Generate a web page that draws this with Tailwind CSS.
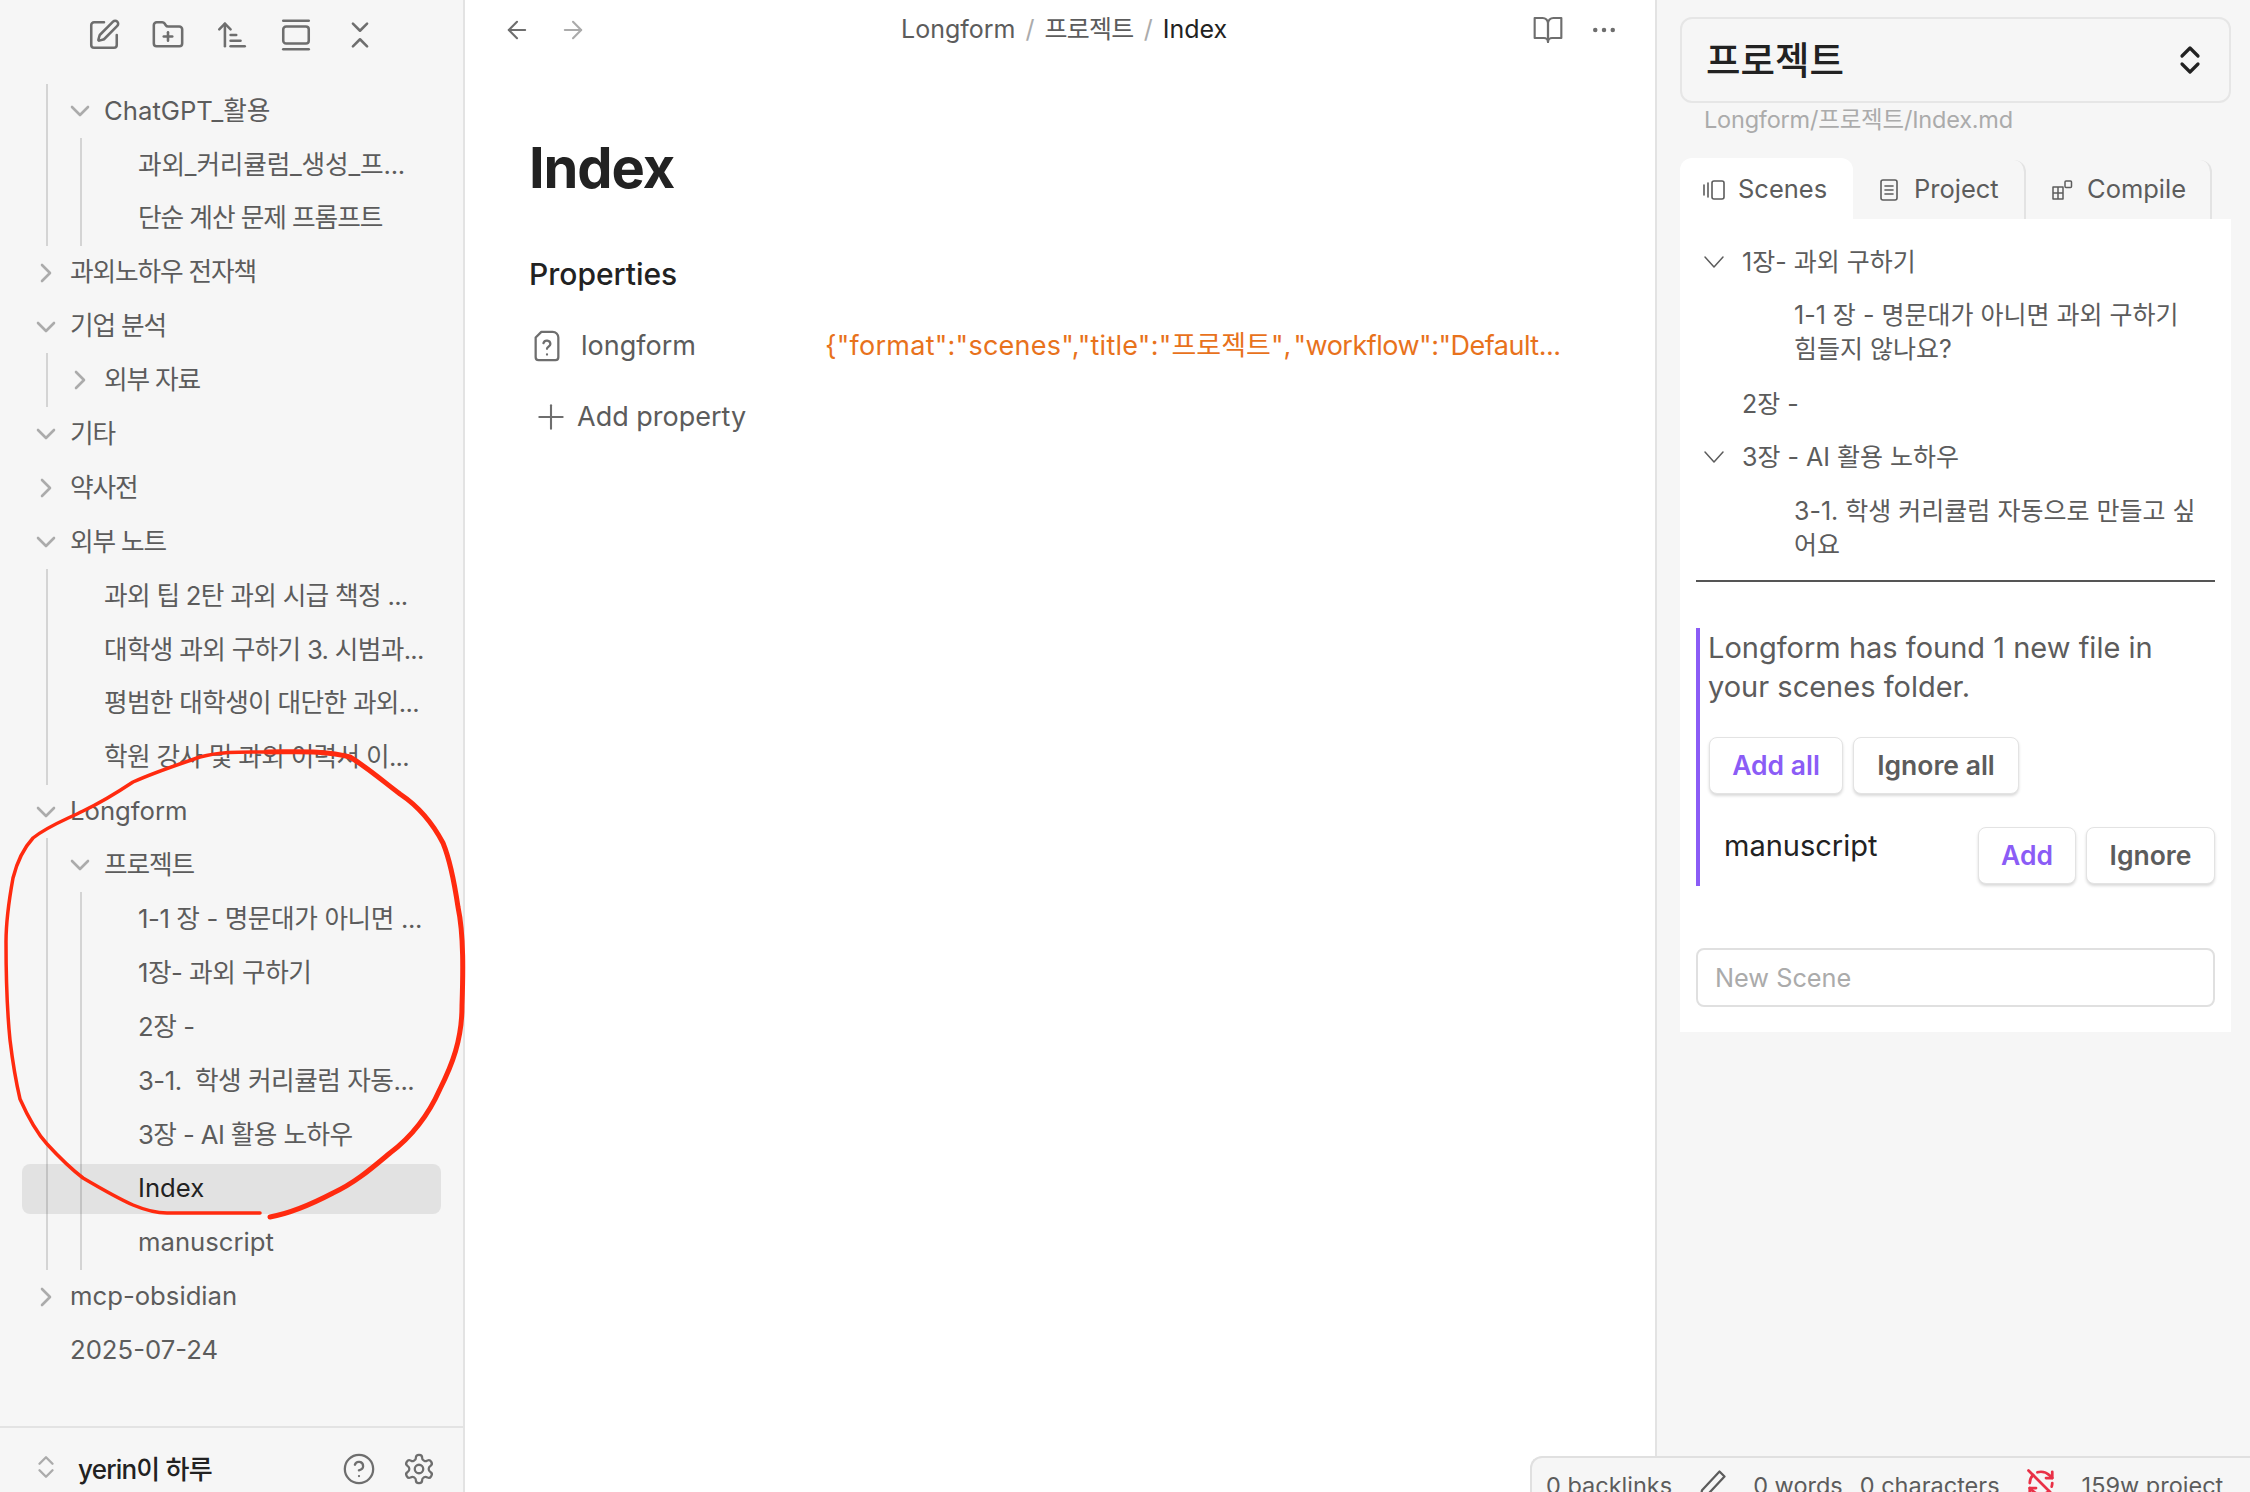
<!DOCTYPE html>
<html lang="en">
<head>
    <meta charset="UTF-8">
    <title>Index - Longform</title>
    <script src="https://cdn.jsdelivr.net/npm/@tailwindcss/browser@4"></script>
</head>
<body class="bg-white font-[Inter,'Noto_Sans_CJK_KR',sans-serif] text-[#5c5c5c]">
    <svg class="hidden">
        <symbol id="down" viewBox="0 0 24 24"><path d="M4 8l8 8 8-8" fill="none" stroke="currentColor" stroke-width="2.6" stroke-linecap="round" stroke-linejoin="round"/></symbol>
        <symbol id="right" viewBox="0 0 24 24"><path d="M8 4l8 8-8 8" fill="none" stroke="currentColor" stroke-width="2.6" stroke-linecap="round" stroke-linejoin="round"/></symbol>
        <symbol id="down-thin" viewBox="0 0 24 24"><path d="M3 7l9 10 9-10" fill="none" stroke="currentColor" stroke-width="1.5" stroke-linecap="round" stroke-linejoin="round"/></symbol>
    </svg>

    <div class="relative flex h-[1492px] w-[2250px] overflow-hidden">
        <!-- file explorer -->
        <aside class="flex w-[465px] shrink-0 flex-col border-r-2 border-[#e3e3e3] bg-[#f6f6f6]">
            <div class="flex h-[84px] shrink-0 items-start gap-[30px] pl-[87px] pt-[18px] text-[#6e6e6e]">
                <svg class="size-[34px]" viewBox="0 0 24 24" fill="none" stroke="currentColor" stroke-width="1.8" stroke-linecap="round" stroke-linejoin="round"><path d="M12 3H5a2 2 0 0 0-2 2v14a2 2 0 0 0 2 2h14a2 2 0 0 0 2-2v-7"/><path d="M18.375 2.625a1 1 0 0 1 3 3l-9.013 9.014a2 2 0 0 1-.853.505l-2.873.84a.5.5 0 0 1-.62-.62l.84-2.873a2 2 0 0 1 .506-.852z"/></svg>
                <svg class="size-[34px]" viewBox="0 0 24 24" fill="none" stroke="currentColor" stroke-width="1.8" stroke-linecap="round" stroke-linejoin="round"><path d="M12 10v6"/><path d="M9 13h6"/><path d="M20 20a2 2 0 0 0 2-2V8a2 2 0 0 0-2-2h-7.9a2 2 0 0 1-1.69-.9L9.6 3.9A2 2 0 0 0 7.93 3H4a2 2 0 0 0-2 2v13a2 2 0 0 0 2 2Z"/></svg>
                <svg class="size-[34px]" viewBox="0 0 24 24" fill="none" stroke="currentColor" stroke-width="1.8" stroke-linecap="round" stroke-linejoin="round"><path d="m3 8 4-4 4 4"/><path d="M7 4v16"/><path d="M11 12h4"/><path d="M11 16h7"/><path d="M11 20h10"/></svg>
                <svg class="size-[34px]" viewBox="0 0 24 24" fill="none" stroke="currentColor" stroke-width="1.8" stroke-linecap="round" stroke-linejoin="round"><path d="M3 2h18"/><rect x="3" y="6" width="18" height="12" rx="2"/><path d="M3 22h18"/></svg>
                <svg class="size-[34px]" viewBox="0 0 24 24" fill="none" stroke="currentColor" stroke-width="1.8" stroke-linecap="round" stroke-linejoin="round"><path d="m7 20 5-5 5 5"/><path d="m7 4 5 5 5-5"/></svg>
            </div>

            <nav class="flex-1 whitespace-nowrap text-[25.7px]">
                <div class="ml-[46px] border-l-2 border-[#d4d4d4]">
                    <div class="flex h-[53.9px] items-center gap-[12px] pl-[20px]"><svg class="size-[24px] text-[#ababab]"><use href="#down"/></svg>ChatGPT_활용</div>
                    <div class="ml-[32px] border-l-2 border-[#d4d4d4] pl-[56px]">
                        <div class="flex h-[53.9px] items-center tracking-[-0.2px]">과외_커리큘럼_생성_프...</div>
                        <div class="flex h-[53.9px] items-center tracking-[-1.05px]">단순 계산 문제 프롬프트</div>
                    </div>
                </div>
                <div class="flex h-[53.9px] items-center gap-[12px] pl-[34px] tracking-[-1.15px]"><svg class="size-[24px] text-[#ababab]"><use href="#right"/></svg>과외노하우 전자책</div>
                <div class="flex h-[53.9px] items-center gap-[12px] pl-[34px] tracking-[-1.15px]"><svg class="size-[24px] text-[#ababab]"><use href="#down"/></svg>기업 분석</div>
                <div class="ml-[46px] border-l-2 border-[#d4d4d4]">
                    <div class="flex h-[53.9px] items-center gap-[12px] pl-[20px] tracking-[-1.15px]"><svg class="size-[24px] text-[#ababab]"><use href="#right"/></svg>외부 자료</div>
                </div>
                <div class="flex h-[53.9px] items-center gap-[12px] pl-[34px] tracking-[-1.15px]"><svg class="size-[24px] text-[#ababab]"><use href="#down"/></svg>기타</div>
                <div class="flex h-[53.9px] items-center gap-[12px] pl-[34px] tracking-[-1.15px]"><svg class="size-[24px] text-[#ababab]"><use href="#right"/></svg>약사전</div>
                <div class="flex h-[53.9px] items-center gap-[12px] pl-[34px] tracking-[-1.15px]"><svg class="size-[24px] text-[#ababab]"><use href="#down"/></svg>외부 노트</div>
                <div class="ml-[46px] border-l-2 border-[#d4d4d4] pl-[56px] tracking-[-0.7px]">
                    <div class="flex h-[53.9px] items-center">과외 팁 2탄 과외 시급 책정 ...</div>
                    <div class="flex h-[53.9px] items-center">대학생 과외 구하기 3. 시범과...</div>
                    <div class="flex h-[53.9px] items-center">평범한 대학생이 대단한 과외...</div>
                    <div class="flex h-[53.9px] items-center">학원 강사 및 과외 이력서 이...</div>
                </div>
                <div class="flex h-[53.9px] items-center gap-[12px] pl-[34px]"><svg class="size-[24px] text-[#ababab]"><use href="#down"/></svg>Longform</div>
                <div class="ml-[46px] border-l-2 border-[#d4d4d4]">
                    <div class="flex h-[53.9px] items-center gap-[12px] pl-[20px] tracking-[-1.15px]"><svg class="size-[24px] text-[#ababab]"><use href="#down"/></svg>프로젝트</div>
                    <div class="ml-[32px] border-l-2 border-[#d4d4d4] pl-[56px]">
                        <div class="flex h-[53.9px] items-center tracking-[-0.4px]">1-1 장 - 명문대가 아니면 ...</div>
                        <div class="flex h-[53.9px] items-center tracking-[-0.5px]">1장- 과외 구하기</div>
                        <div class="flex h-[53.9px] items-center tracking-[-0.4px]">2장 -</div>
                        <div class="flex h-[53.9px] items-center whitespace-pre tracking-[-0.5px]">3-1.  학생 커리큘럼 자동...</div>
                        <div class="flex h-[53.9px] items-center tracking-[-0.6px]">3장 - AI 활용 노하우</div>
                        <div class="flex h-[53.9px] items-center">
                            <div class="ml-[-116px] flex h-[50px] w-[419px] items-center rounded-lg bg-black/8 pl-[116px] text-[#222222]">Index</div>
                        </div>
                        <div class="flex h-[53.9px] items-center">manuscript</div>
                    </div>
                </div>
                <div class="flex h-[53.9px] items-center gap-[12px] pl-[34px]"><svg class="size-[24px] text-[#ababab]"><use href="#right"/></svg>mcp-obsidian</div>
                <div class="flex h-[53.9px] items-center pl-[70px]">2025-07-24</div>
            </nav>

            <div class="flex h-[66px] shrink-0 items-start border-t-2 border-[#e3e3e3] pt-[24px]">
                <svg class="ml-[33px] mt-[2px] size-[26px] text-[#ababab]" viewBox="0 0 24 24" fill="none" stroke="currentColor" stroke-width="2.2" stroke-linecap="round" stroke-linejoin="round"><path d="m6 9 6-6 6 6"/><path d="m6 15 6 6 6-6"/></svg>
                <span class="ml-[19px] text-[26px] font-medium leading-[36px] tracking-[-0.8px] text-[#222222]">yerin이 하루</span>
                <svg class="ml-auto size-[34px] text-[#6e6e6e]" viewBox="0 0 24 24" fill="none" stroke="currentColor" stroke-width="1.6" stroke-linecap="round" stroke-linejoin="round"><circle cx="12" cy="12" r="10"/><path d="M9.09 9a3 3 0 0 1 5.83 1c0 2-3 3-3 3"/><path d="M12 17h.01"/></svg>
                <svg class="ml-[26px] mr-[27px] size-[34px] text-[#6e6e6e]" viewBox="0 0 24 24" fill="none" stroke="currentColor" stroke-width="1.6" stroke-linecap="round" stroke-linejoin="round"><path d="M12.22 2h-.44a2 2 0 0 0-2 2v.18a2 2 0 0 1-1 1.73l-.43.25a2 2 0 0 1-2 0l-.15-.08a2 2 0 0 0-2.73.73l-.22.38a2 2 0 0 0 .73 2.73l.15.1a2 2 0 0 1 1 1.72v.51a2 2 0 0 1-1 1.74l-.15.09a2 2 0 0 0-.73 2.73l.22.38a2 2 0 0 0 2.73.73l.15-.08a2 2 0 0 1 2 0l.43.25a2 2 0 0 1 1 1.73V20a2 2 0 0 0 2 2h.44a2 2 0 0 0 2-2v-.18a2 2 0 0 1 1-1.73l.43-.25a2 2 0 0 1 2 0l.15.08a2 2 0 0 0 2.73-.73l.22-.39a2 2 0 0 0-.73-2.73l-.15-.08a2 2 0 0 1-1-1.74v-.5a2 2 0 0 1 1-1.74l.15-.09a2 2 0 0 0 .73-2.73l-.22-.38a2 2 0 0 0-2.73-.73l-.15.08a2 2 0 0 1-2 0l-.43-.25a2 2 0 0 1-1-1.73V4a2 2 0 0 0-2-2z"/><circle cx="12" cy="12" r="3"/></svg>
            </div>
        </aside>

        <!-- note -->
        <main class="flex w-[1192px] shrink-0 flex-col border-r-2 border-[#e3e3e3]">
            <div class="flex h-[59px] shrink-0 items-center pl-[38px] pr-[36px]">
                <div class="flex w-[240px] items-center gap-[28px]">
                    <svg class="size-[28px] text-[#6e6e6e]" viewBox="0 0 24 24" fill="none" stroke="currentColor" stroke-width="1.8" stroke-linecap="round" stroke-linejoin="round"><path d="m12 19-7-7 7-7"/><path d="M19 12H5"/></svg>
                    <svg class="size-[28px] text-[#ababab]" viewBox="0 0 24 24" fill="none" stroke="currentColor" stroke-width="1.8" stroke-linecap="round" stroke-linejoin="round"><path d="M5 12h14"/><path d="m12 5 7 7-7 7"/></svg>
                </div>
                <div class="ml-[158px] flex items-center gap-[10px] whitespace-nowrap text-[25px]">
                    <span>Longform</span><span class="text-[#ababab]">/</span><span class="tracking-[-0.7px]">프로젝트</span><span class="text-[#ababab]">/</span><span class="text-[#222222]">Index</span>
                </div>
                <svg class="ml-auto size-[32px] text-[#6e6e6e]" viewBox="0 0 24 24" fill="none" stroke="currentColor" stroke-width="1.6" stroke-linecap="round" stroke-linejoin="round"><path d="M2 3h6a4 4 0 0 1 4 4v14a3 3 0 0 0-3-3H2z"/><path d="M22 3h-6a4 4 0 0 0-4 4v14a3 3 0 0 1 3-3h7z"/></svg>
                <svg class="ml-[25px] size-[30px] text-[#6e6e6e]" viewBox="0 0 24 24" fill="currentColor"><circle cx="5" cy="12" r="1.8"/><circle cx="12" cy="12" r="1.8"/><circle cx="19" cy="12" r="1.8"/></svg>
            </div>
            <div class="pl-[64px]">
                <h1 class="mt-[72px] text-[56px] font-bold leading-[74px] tracking-[-0.02em] text-[#222222]">Index</h1>
                <h2 class="mt-[49px] text-[30px] font-medium leading-[40px] text-[#222222]">Properties</h2>
                <div class="ml-[1px] mt-[16px] flex h-[72px] items-center text-[27px]">
                    <svg class="size-[34px] text-[#6e6e6e]" viewBox="0 0 24 24" fill="none" stroke="currentColor" stroke-width="1.6" stroke-linecap="round" stroke-linejoin="round"><path d="M8 2h8a4 4 0 0 1 4 4v14a2 2 0 0 1-2 2H6a2 2 0 0 1-2-2V6z"/><path d="M9.5 10a2.5 2.5 0 0 1 4.9.6c0 1.6-2.4 2-2.4 3.4"/><path d="M12 18h.01"/></svg>
                    <span class="ml-[17px] w-[244px]">longform</span>
                    <span class="whitespace-nowrap text-[#e8721c]"><span class="tracking-[0.25px]">{"format":"scenes","title":"</span>프로젝트<span class="tracking-[2.2px]">",</span><span class="tracking-[-0.5px]">"workflow":"Default...</span></span>
                </div>
                <div class="ml-[1px] flex h-[70px] items-center text-[27px]">
                    <svg class="ml-[7px] size-[28px] text-[#6e6e6e]" viewBox="0 0 24 24" fill="none" stroke="currentColor" stroke-width="1.8" stroke-linecap="round"><path d="M12 2v20"/><path d="M2 12h20"/></svg>
                    <span class="ml-[12px]">Add property</span>
                </div>
            </div>
        </main>

        <!-- longform pane -->
        <section class="flex-1 bg-[#f6f6f6] pl-[23px] pr-[19px] pt-[17px]">
            <div class="flex h-[86px] items-center justify-between rounded-xl border-2 border-[#e6e6e6] pl-[24px] pr-[23px]">
                <span class="pt-[2px] text-[37.5px] font-medium text-[#222222]">프로젝트</span>
                <svg class="size-[32px] text-[#222222]" viewBox="0 0 24 24" fill="none" stroke="currentColor" stroke-width="2.4" stroke-linecap="round" stroke-linejoin="round"><path d="m6 9 6-6 6 6"/><path d="m6 15 6 6 6-6"/></svg>
            </div>
            <div class="ml-[24px] h-[55px] text-[23.5px] leading-[34px] tracking-[-0.2px] text-[#ababab]">Longform/프로젝트/Index.md</div>
            <div class="flex h-[61px] pt-[2px] text-[25.5px]">
                <div class="-mt-[2px] flex w-[173px] items-center gap-[12px] rounded-t-xl bg-white pl-[22px] pt-[2px]">
                    <svg class="size-[24px]" viewBox="0 0 24 24" fill="none" stroke="currentColor" stroke-width="1.6" stroke-linecap="round" stroke-linejoin="round"><path d="M2 7v10"/><path d="M6 5v14"/><rect x="10" y="3" width="12" height="18" rx="2"/></svg>
                    Scenes
                </div>
                <div class="flex w-[173px] items-center gap-[13px] rounded-tr-xl border-r-2 border-[#e3e3e3] pl-[24px]">
                    <svg class="size-[24px]" viewBox="0 0 24 24" fill="none" stroke="currentColor" stroke-width="1.6" stroke-linecap="round" stroke-linejoin="round"><rect x="4" y="2" width="16" height="20" rx="2"/><path d="M8 8h8"/><path d="M8 12h8"/><path d="M8 16h8"/></svg>
                    Project
                </div>
                <div class="flex w-[186px] items-center gap-[13px] rounded-tr-xl border-r-2 border-[#e3e3e3] pl-[24px]">
                    <svg class="size-[24px]" viewBox="0 0 24 24" fill="none" stroke="currentColor" stroke-width="1.5" stroke-linejoin="round"><path d="M3 9h10v12H3z"/><path d="M3 15h10"/><path d="M8 9v12"/><rect x="15" y="3" width="6.5" height="6.5" rx="1"/></svg>
                    Compile
                </div>
            </div>
            <div class="h-[813px] bg-white px-[16px] pt-[20px]">
                <div class="text-[25px] leading-[34px]">
                    <div class="flex h-[46px] items-center gap-[16px] pl-[6px]"><svg class="size-[24px]"><use href="#down-thin"/></svg>1장- 과외 구하기</div>
                    <div class="pl-[98px] pr-[20px] pt-[13px]">1-1 장 - 명문대가 아니면 과외 구하기 힘들지 않나요?</div>
                    <div class="mt-[15px] flex h-[46px] items-center pl-[46px]">2장 -</div>
                    <div class="mt-[7px] flex h-[46px] items-center gap-[16px] pl-[6px]"><svg class="size-[24px]"><use href="#down-thin"/></svg>3장 - AI 활용 노하우</div>
                    <div class="pl-[98px] pr-[10px] pt-[14px]">3-1. 학생 커리큘럼 자동으로 만들고 싶어요</div>
                </div>
                <div class="mt-[18px] border-t-2 border-[#555555]"></div>
                <div class="mt-[46px] h-[258px] border-l-4 border-[#8b5cf6] pl-[9px]">
                    <p class="-ml-[1px] text-[29px] leading-[39px]">Longform has found 1 new file in your scenes folder.</p>
                    <div class="mt-[31px] flex gap-[10px] text-[26.5px] font-semibold">
                        <button class="h-[57px] w-[134px] rounded-lg border border-[#e3e3e3] bg-white text-[#8b5cf6] shadow-[0_2px_3px_rgba(0,0,0,0.15)]">Add all</button>
                        <button class="h-[57px] w-[166px] rounded-lg border border-[#e3e3e3] bg-white shadow-[0_2px_3px_rgba(0,0,0,0.15)]">Ignore all</button>
                    </div>
                    <div class="mt-[33px] flex items-start">
                        <span class="-mt-[1px] pl-[15px] text-[29px] leading-[40px] text-[#222222]">manuscript</span>
                        <div class="ml-auto flex gap-[10px] text-[26.5px] font-semibold">
                            <button class="h-[57px] w-[98px] rounded-lg border border-[#e3e3e3] bg-white text-[#8b5cf6] shadow-[0_2px_3px_rgba(0,0,0,0.15)]">Add</button>
                            <button class="h-[57px] w-[129px] rounded-lg border border-[#e3e3e3] bg-white shadow-[0_2px_3px_rgba(0,0,0,0.15)]">Ignore</button>
                        </div>
                    </div>
                </div>
                <div class="mt-[62px] flex h-[59px] items-center rounded-lg border-2 border-[#e0e0e0] pl-[17px] text-[25.3px] text-[#ababab]">New Scene</div>
            </div>
        </section>

        <!-- status bar over the pane -->
        <div class="absolute bottom-0 right-0 flex h-[36px] w-[720px] items-start overflow-hidden whitespace-nowrap rounded-tl-xl border-l-2 border-t-2 border-[#e0e0e0] bg-[#f6f6f6] pl-[14px] pt-[10px] text-[23.5px] leading-[36px]">
            <span>0 backlinks</span>
            <svg class="ml-[25px] mt-[1px] size-[30px]" viewBox="0 0 24 24" fill="none" stroke="currentColor" stroke-width="1.8" stroke-linecap="round" stroke-linejoin="round"><path d="M18 2l4 4L8 21l-5 1 1-5z"/></svg>
            <span class="ml-[26px]">0 words</span>
            <span class="ml-[17px]">0 characters</span>
            <svg class="ml-[26px] size-[30px] text-[#e93147]" viewBox="0 0 24 24" fill="none" stroke="currentColor" stroke-width="2.2" stroke-linecap="round" stroke-linejoin="round"><path d="M21 8L18.74 5.74A9.75 9.75 0 0 0 12 3C11 3 10.03 3.15 9.12 3.44"/><path d="M8 16H3v5"/><path d="M3 12C3 9.51 4 7.26 5.64 5.64"/><path d="m3 16 2.26 2.26A9.75 9.75 0 0 0 12 21c2.49 0 4.74-1 6.36-2.64"/><path d="M21 12c0 1-.16 1.97-.47 2.87"/><path d="M21 3v5h-5"/><path d="M22 22 2 2"/></svg>
            <span class="ml-[26px]">159w project</span>
        </div>

        <!-- red hand-drawn circle -->
        <svg class="pointer-events-none absolute left-0 top-0" width="470" height="1230" fill="none" stroke="#ff2a0f" stroke-linecap="round" stroke-linejoin="round">
            <path stroke-width="5" d="M270 1217C292 1213 312 1204 333 1193C355 1183 372 1168 390 1153C410 1138 428 1116 440 1089C452 1065 462 1040 462 1006C463 975 464 935 458 907C454 880 450 860 443 843C432 822 418 806 400 794C384 782 368 768 350 757C325 750 295 752 267 752"/>
            <path stroke-width="3.5" d="M267 752C243 752 222 751 200 757C177 765 155 772 133 782C115 794 100 803 83 811C65 820 48 826 33 838C22 850 17 862 13 878C9 900 6 920 6 942C6 975 7 1010 10 1040C13 1065 16 1082 20 1099C28 1117 36 1132 47 1144C58 1156 70 1168 83 1178C100 1188 117 1198 133 1205C145 1210 155 1213 167 1213L260 1213"/>
        </svg>
    </div>
</body>
</html>
